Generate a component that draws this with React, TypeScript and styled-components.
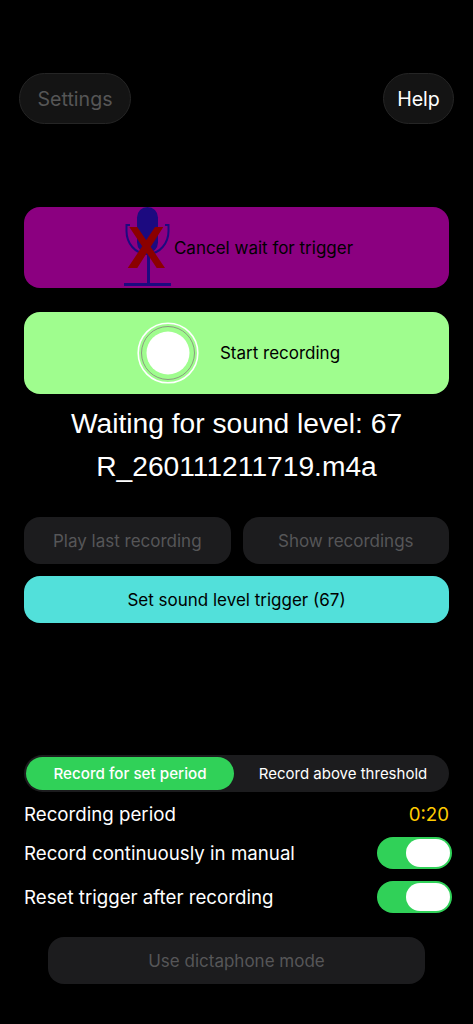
import React from "react";
import styled, { createGlobalStyle } from "styled-components";

const Global = createGlobalStyle`
  html, body { margin: 0; padding: 0; background: #000; }
  body { font-family: Inter, "Liberation Sans", sans-serif; -webkit-font-smoothing: antialiased; }
`;

const Page = styled.div`
  width: 473px;
  height: 1024px;
  background: #000;
  display: flex;
  flex-direction: column;
  box-sizing: border-box;
  padding: 73px 24px 0;
  overflow: hidden;
`;

const TopBar = styled.div`
  display: flex;
  justify-content: space-between;
  margin: 0 -5px 83px;
`;

const Pill = styled.div<{ $dim?: boolean; $w: number }>`
  width: ${(p) => p.$w}px;
  height: 51px;
  box-sizing: border-box;
  border-radius: 26px;
  background: #141414;
  border: 1px solid #252525;
  color: ${(p) => (p.$dim ? "#565656" : "#fff")};
  font-size: 19.6px;
  display: flex;
  align-items: center;
  justify-content: center;
`;

const BigAction = styled.div<{ $bg: string; $gap: number; $mt: number; $h: number }>`
  height: ${(p) => p.$h}px;
  margin-top: ${(p) => p.$mt}px;
  padding-left: 4px;
  border-radius: 16px;
  background: ${(p) => p.$bg};
  color: #000;
  font-size: 17px;
  display: flex;
  align-items: center;
  justify-content: center;
  gap: ${(p) => p.$gap}px;
`;

const Status = styled.div<{ $mt: number }>`
  margin-top: ${(p) => p.$mt}px;
  height: 36px;
  line-height: 36px;
  text-align: center;
  color: #fff;
  font-family: "Liberation Sans", Arial, sans-serif;
  font-size: 28.2px;
`;

const ButtonRow = styled.div`
  display: grid;
  grid-template-columns: 1fr 1fr;
  gap: 12px;
  margin-top: 33px;
`;

const Soft = styled.div`
  height: 47px;
  border-radius: 16px;
  background: #1c1c1e;
  color: #565658;
  font-size: 17px;
  display: flex;
  align-items: center;
  justify-content: center;
`;

const Teal = styled.div`
  height: 47px;
  margin-top: 12px;
  border-radius: 16px;
  background: #52e0da;
  color: #000;
  font-size: 17px;
  display: flex;
  align-items: center;
  justify-content: center;
`;

const Segment = styled.div`
  margin-top: 132px;
  height: 37px;
  box-sizing: border-box;
  padding: 2px;
  border-radius: 19px;
  background: #1c1c1e;
  display: grid;
  grid-template-columns: 208px 1fr;
`;

const SegmentItem = styled.div<{ $on?: boolean }>`
  border-radius: 17px;
  padding-left: ${(p) => (p.$on ? 0 : 5)}px;
  background: ${(p) => (p.$on ? "#30d158" : "transparent")};
  color: #fff;
  font-size: ${(p) => (p.$on ? 15.2 : 15)}px;
  font-weight: ${(p) => (p.$on ? 500 : 400)};
  display: flex;
  align-items: center;
  justify-content: center;
`;

const Row = styled.div<{ $h: number }>`
  height: ${(p) => p.$h}px;
  display: flex;
  align-items: center;
  justify-content: space-between;
  color: #fff;
  font-size: 18.7px;
`;

const Period = styled.span`
  color: #ffcc00;
`;

const Toggle = styled.div`
  width: 75px;
  height: 32px;
  margin-right: -3px;
  box-sizing: border-box;
  padding: 2px;
  border-radius: 16px;
  background: #30d158;
  display: flex;
  justify-content: flex-end;
`;

const Knob = styled.div`
  width: 44px;
  height: 28px;
  border-radius: 14px;
  background: #fff;
`;

const Dictaphone = styled.div`
  height: 47px;
  margin: 13px 24px 0;
  border-radius: 16px;
  background: #1c1c1e;
  color: #565658;
  font-size: 17px;
  display: flex;
  align-items: center;
  justify-content: center;
`;

const MicIcon = () => (
  <svg width="48" height="81" viewBox="0 0 48 81" fill="none">
    <rect x="13" y="0" width="21" height="46" rx="10.5" fill="#1c0a80" />
    <path
      d="M6 18H2.5V24C2.5 36 11 47 23.5 47C36 47 44.5 36 44.5 24V18H41"
      stroke="#1c0a80"
      strokeWidth="2"
    />
    <path d="M24.5 47V77M0 77.5H47" stroke="#1c0a80" strokeWidth="3" />
    <path
      d="M5.3 20H13.3L41 61H32.7ZM31 20H39.3L13.3 61H3.7Z"
      fill="#8b0000"
    />
  </svg>
);

const RecordIcon = () => (
  <svg width="62" height="62" viewBox="0 0 62 62" fill="none">
    <circle cx="31" cy="31" r="29.8" stroke="#fff" strokeWidth="1.6" />
    <circle cx="31" cy="31" r="26.5" stroke="#8a9a80" strokeWidth="1" />
    <circle cx="31" cy="31" r="21.5" fill="#fff" />
  </svg>
);

export default function App() {
  return (
    <Page>
      <Global />
      <TopBar>
        <Pill $dim $w={112}>Settings</Pill>
        <Pill $w={71}>Help</Pill>
      </TopBar>
      <BigAction $bg="#8b0080" $gap={2} $mt={0} $h={81}>
        <MicIcon />
        <span>Cancel wait for trigger</span>
      </BigAction>
      <BigAction $bg="#9ffd8e" $gap={21} $mt={24} $h={82}>
        <RecordIcon />
        <span>Start recording</span>
      </BigAction>
      <Status $mt={11}>Waiting for sound level: 67</Status>
      <Status $mt={7}>R_260111211719.m4a</Status>
      <ButtonRow>
        <Soft>Play last recording</Soft>
        <Soft>Show recordings</Soft>
      </ButtonRow>
      <Teal>Set sound level trigger (67)</Teal>
      <Segment>
        <SegmentItem $on>Record for set period</SegmentItem>
        <SegmentItem>Record above threshold</SegmentItem>
      </Segment>
      <Row $h={44}>
        <span>Recording period</span>
        <Period>0:20</Period>
      </Row>
      <Row $h={34}>
        <span>Record continuously in manual</span>
        <Toggle><Knob /></Toggle>
      </Row>
      <Row $h={54}>
        <span>Reset trigger after recording</span>
        <Toggle><Knob /></Toggle>
      </Row>
      <Dictaphone>Use dictaphone mode</Dictaphone>
    </Page>
  );
}
